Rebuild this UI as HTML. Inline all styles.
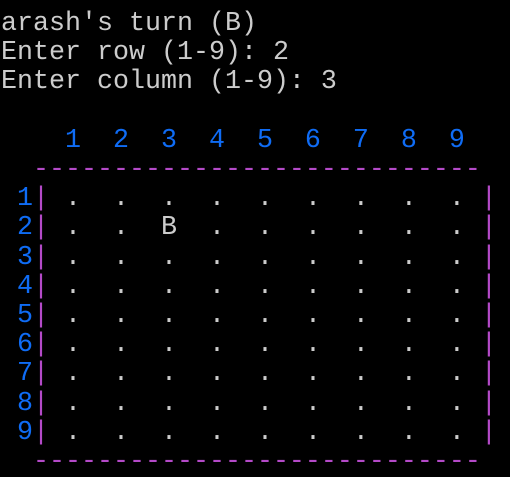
<!DOCTYPE html>
<html><head><style>
html,body{margin:0;padding:0;background:#000;}
body{width:510px;height:472px;overflow:hidden;}
pre{margin:0;padding:10px 0 0 1px;font-family:"Liberation Mono",monospace;font-size:26.67px;line-height:29.2px;color:#cccccc;}
.b{color:#0f6cf5}.m{color:#b44ac8}
</style></head><body><pre>arash's turn (B)
Enter row (1-9): 2
Enter column (1-9): 3

<span class="b">    1  2  3  4  5  6  7  8  9</span>
<span class="m">  ----------------------------</span>
<span class="b"> 1</span><span class="m">|</span> .  .  .  .  .  .  .  .  . <span class="m">|</span>
<span class="b"> 2</span><span class="m">|</span> .  .  B  .  .  .  .  .  . <span class="m">|</span>
<span class="b"> 3</span><span class="m">|</span> .  .  .  .  .  .  .  .  . <span class="m">|</span>
<span class="b"> 4</span><span class="m">|</span> .  .  .  .  .  .  .  .  . <span class="m">|</span>
<span class="b"> 5</span><span class="m">|</span> .  .  .  .  .  .  .  .  . <span class="m">|</span>
<span class="b"> 6</span><span class="m">|</span> .  .  .  .  .  .  .  .  . <span class="m">|</span>
<span class="b"> 7</span><span class="m">|</span> .  .  .  .  .  .  .  .  . <span class="m">|</span>
<span class="b"> 8</span><span class="m">|</span> .  .  .  .  .  .  .  .  . <span class="m">|</span>
<span class="b"> 9</span><span class="m">|</span> .  .  .  .  .  .  .  .  . <span class="m">|</span>
<span class="m">  ----------------------------</span>
</pre></body></html>
